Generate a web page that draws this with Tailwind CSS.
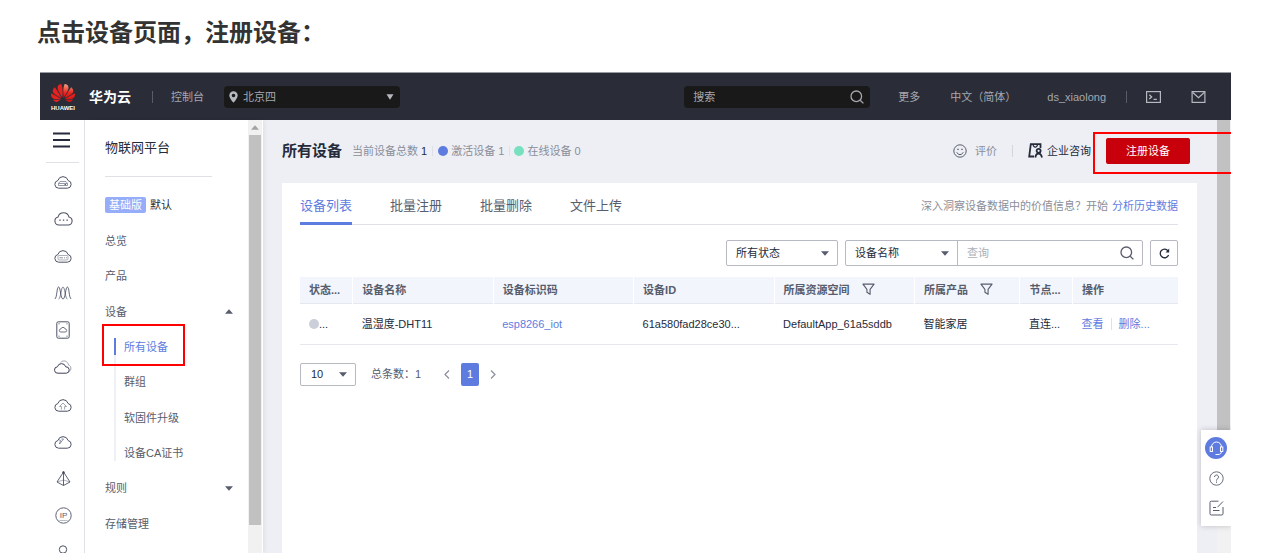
<!DOCTYPE html>
<html lang="zh-CN">
<head>
    <meta charset="UTF-8">
    <meta name="viewport" content="width=device-width, initial-scale=1.0">
    <title>所有设备</title>
    <script src="https://cdn.jsdelivr.net/npm/@tailwindcss/browser@4"></script>
</head>
<body class="h-screen flex flex-col bg-white pl-10 pr-[38px] pb-[7px] overflow-hidden font-['Liberation_Sans','Noto_Sans_CJK_SC',sans-serif] text-[11px] leading-4 text-[#575d6c]">
    <!-- Shared icons -->
    <svg class="hidden">
        <symbol id="cloud" viewBox="0 0 18 14">
            <path d="M4.6 13.2A3.9 3.9 0 0 1 3.9 5.5a5.3 5.3 0 0 1 10.2 0 3.9 3.9 0 0 1-.7 7.7z" fill="none" stroke="#4c5266" stroke-width="1"/>
        </symbol>
        <symbol id="petals" viewBox="0 0 12 24">
            <path d="M3.67 6.14S1.82 7.91 1.72 9.78v.35c.08 1.51 1.22 2.4 1.22 2.4 1.83 1.79 6.26 4.04 7.3 4.55 0 0 .06.03.1-.01l.02-.04v-.04C7.52 10.8 3.67 6.14 3.67 6.14zM9.65 18.6c-.02-.08-.1-.08-.1-.08l-7.38.26c.8 1.43 2.15 2.53 3.56 2.2.96-.25 3.16-1.78 3.88-2.3.06-.05.04-.09.04-.09zm.08-.78C6.49 15.63.21 12.28.21 12.28c-.15.46-.2.9-.21 1.3v.07c0 1.07.4 1.82.4 1.82.8 1.69 2.34 2.2 2.34 2.2.7.3 1.4.31 1.4.31.12.02 4.4 0 5.54 0 .05 0 .08-.05.08-.05v-.06c0-.03-.03-.05-.03-.05zM9.06 3.19a3.42 3.42 0 0 0-2.57 3.15v.41c.03.6.16 1.05.16 1.05.66 2.9 3.86 7.65 4.55 8.65.05.05.1.03.1.03a.1.1 0 0 0 .06-.1c1.06-10.6-1.11-13.42-1.11-13.42-.32.02-1.19.23-1.19.23z"/>
        </symbol>
        <symbol id="search" viewBox="0 0 14 14">
            <circle cx="6.3" cy="6.3" r="5.3" fill="none" stroke="currentColor" stroke-width="1.3"/>
            <path d="M10.2 10.2l3.2 3.2" stroke="currentColor" stroke-width="1.3"/>
        </symbol>
        <symbol id="funnel" viewBox="0 0 14 14">
            <path d="M1 1.2h12L8.7 6.8v5.4L5.3 10V6.8z" fill="none" stroke="#575d6c" stroke-width="1.2" stroke-linejoin="round"/>
        </symbol>
        <symbol id="down" viewBox="0 0 8 5">
            <path d="M0 0.3h8L4 4.8z" fill="currentColor"/>
        </symbol>
    </svg>

    <h1 class="shrink-0 h-[72px] pt-[17px] text-2xl font-bold text-[#333] -ml-[3px]">点击设备页面，注册设备：</h1>

    <div class="relative flex-1 min-h-0 flex flex-col overflow-hidden">
        <!-- Top bar -->
        <header class="shrink-0 h-12 flex items-center bg-[#2a2c37] border-t border-[#9a9ba1] pl-[10px] pr-[25px] text-[#a5a8b0]">
            <a href="#" aria-label="HUAWEI" class="block">
                <svg class="w-[26px] h-[28px]" viewBox="0 0 26 28">
                    <defs>
                        <linearGradient id="red" x1="0" y1="0" x2="0" y2="1">
                            <stop offset="0" stop-color="#f7a07c"/>
                            <stop offset=".5" stop-color="#e8241f"/>
                            <stop offset="1" stop-color="#d0100f"/>
                        </linearGradient>
                    </defs>
                    <use href="#petals" x="1" y="-2" width="12" height="24" fill="#e2231f"/>
                    <g transform="translate(26 0) scale(-1 1)"><use href="#petals" x="1" y="-2" width="12" height="24" fill="url(#red)"/></g>
                    <text x="13" y="27" text-anchor="middle" font-size="6" font-weight="700" fill="#fff">HUAWEI</text>
                </svg>
            </a>
            <a href="#" class="ml-[13px] text-sm font-bold text-white">华为云</a>
            <span class="ml-[21px] w-px h-3 bg-[#5a5c66]"></span>
            <a href="#" class="ml-[18px]">控制台</a>
            <div class="relative ml-5 flex items-center">
                <svg class="absolute left-[5px] w-[9px] h-3" viewBox="0 0 9 12"><path fill-rule="evenodd" d="M4.5.3A4.2 4.2 0 0 0 .3 4.5C.3 7.3 4.5 11.7 4.5 11.7S8.7 7.3 8.7 4.5A4.2 4.2 0 0 0 4.5.3zm0 2.4a1.8 1.8 0 1 1 0 3.6 1.8 1.8 0 0 1 0-3.6z" fill="#b5b8bf"/></svg>
                <select aria-label="区域" class="appearance-none w-44 h-[22px] pl-[19px] rounded-sm bg-[#191919]">
                    <option>北京四</option>
                </select>
                <svg class="absolute right-[6px] w-2 h-[6px] pointer-events-none" viewBox="0 0 8 6"><path d="M.5.3h7L4 5.8z" fill="#b5b8bf"/></svg>
            </div>
            <div class="relative ml-auto flex items-center">
                <input type="text" aria-label="搜索" placeholder="搜索" class="w-[186px] h-[22px] pl-[9px] rounded-sm bg-[#191919] placeholder:text-[#a5a8b0]">
                <svg class="absolute right-[6px] w-[14px] h-[14px]"><use href="#search"/></svg>
            </div>
            <a href="#" class="ml-7">更多</a>
            <a href="#" class="ml-[30px]">中文（简体）</a>
            <a href="#" class="ml-[31px]">ds_xiaolong</a>
            <span class="ml-5 w-px h-3 bg-[#5a5c66]"></span>
            <button type="button" aria-label="Cloud Shell" class="ml-[19px]">
                <svg class="w-[15px] h-3" viewBox="0 0 15 12" fill="none" stroke="#b5b8bf"><rect x=".6" y=".6" width="13.8" height="10.8" stroke-width="1.2"/><path d="M3.3 3.7l2.4 2.2-2.4 2.2M7.5 8.4h3.4" stroke-width="1.3"/></svg>
            </button>
            <button type="button" aria-label="消息" class="ml-[30px]">
                <svg class="w-[15px] h-3" viewBox="0 0 14 12" fill="none" stroke="#b5b8bf" stroke-width="1.2"><rect x=".6" y=".6" width="12.8" height="10.8"/><path d="M1 1.2l6 5.6 6-5.6"/></svg>
            </button>
        </header>

        <div class="flex-1 min-h-0 flex">
            <!-- Service rail -->
            <aside class="shrink-0 w-[45px] flex flex-col items-center border-r border-[#dfe1e6] overflow-hidden">
                <button type="button" aria-label="菜单" class="mt-3 ml-[-2px] shrink-0">
                    <svg class="w-[17px] h-4" viewBox="0 0 17 16" stroke="#252b3a" stroke-width="1.8"><path d="M0 1.5h17M0 8h17M0 14.5h17"/></svg>
                </button>
                <span class="shrink-0 mt-[14px] w-[33px] h-px bg-[#dfe1e6]"></span>
                <div class="pl-[2px] flex flex-col items-center">
                    <a href="#" aria-label="弹性云服务器" class="h-[37px] flex items-center">
                        <svg class="w-[18px] h-[14px]" viewBox="0 0 18 14"><use href="#cloud"/><path d="M4.500 8.500l1.500-2h6l1.500 2v2h-9zM4.500 8.500h9" fill="none" stroke="#7a8094" stroke-width=".8"/><path d="M10.500 9.600h1.500" stroke="#4c5266"/></svg>
                    </a>
                    <a href="#" aria-label="云耀" class="h-[37px] flex items-center">
                        <svg class="w-[19px] h-[15px]" viewBox="0 0 18 14"><use href="#cloud"/><path d="M5 8.500h1.300M8.400 8.500h1.300M11.800 8.500h1.300" stroke="#4c5266" stroke-width="1.300"/></svg>
                    </a>
                    <a href="#" aria-label="裸金属服务器" class="h-[37px] flex items-center">
                        <svg class="w-[18px] h-[14px]" viewBox="0 0 18 14"><use href="#cloud"/><rect x="4" y="6.500" width="10" height="4.500" rx="1" fill="none" stroke="#8a8e99" stroke-width=".7"/><path d="M5.500 8.800h3.500M10 8.800h1M12 8.800h1" stroke="#8a8e99"/></svg>
                    </a>
                    <a href="#" aria-label="弹性伸缩" class="h-[37px] flex items-center">
                        <svg class="w-[18px] h-[14px]" viewBox="0 0 18 14" fill="none" stroke="#4c5266" stroke-width=".9"><path d="M.8 13C3.200 12 2.600 1 4.600 1S6.500 13 9 13s2.400-12 4.400-12 1.400 11 3.800 12"/><path d="M4.600 13C6.800 13 7 1 9 1s2.200 12 4.400 12" opacity=".8"/></svg>
                    </a>
                    <a href="#" aria-label="云硬盘" class="h-[37px] flex items-center">
                        <svg class="w-[14px] h-[18px]" viewBox="0 0 14 18" fill="none" stroke="#4c5266"><rect x=".8" y=".8" width="12.400" height="16.400" rx="1.500"/><path d="M4.800 11a1.500 1.500 0 0 1 0-3 2.300 2.300 0 0 1 4.400 0 1.500 1.500 0 0 1 0 3z" stroke-width=".8"/><path d="M2.500 2.800h1M10.500 2.800h1M2.500 15.200h1M10.500 15.200h1"/></svg>
                    </a>
                    <a href="#" aria-label="专属云" class="h-[38px] flex items-center">
                        <svg class="w-[18px] h-[14px]" viewBox="0 0 18 14" fill="none" stroke="#3c4256"><path d="M4 13.200a3.200 3.200 0 0 1-.6-6.400 4.300 4.300 0 0 1 8.300 0 3.200 3.200 0 0 1 .6 6.400z"/><path d="M6.500 2.500C9.500-.6 14 1.200 14.500 5c3 .9 3.200 5 .6 6.500" stroke="#8a8e99" stroke-width=".8"/></svg>
                    </a>
                    <a href="#" aria-label="对象存储" class="h-[37px] flex items-center">
                        <svg class="w-[18px] h-[14px]" viewBox="0 0 18 14"><use href="#cloud"/><path d="M7.400 11.500V8.500H5.500L9 5l3.500 3.500h-1.900v3" fill="none" stroke="#8a8e99" stroke-width=".8"/></svg>
                    </a>
                    <a href="#" aria-label="云加速" class="h-[37px] flex items-center">
                        <svg class="w-[18px] h-[14px]" viewBox="0 0 18 14"><use href="#cloud"/><path d="M4.500 4.500l2 1L5.500 9l4-5H7.500" fill="none" stroke="#6b7186" stroke-width=".8"/></svg>
                    </a>
                    <a href="#" aria-label="虚拟私有云" class="h-[37px] flex items-center">
                        <svg class="w-[15px] h-[15px]" viewBox="0 0 15 15" fill="none" stroke="#4c5266" stroke-width=".9"><path d="M7.500 1L1 11l6.500 3.500L14 11zM7.500 1v13.500"/><path d="M1 11l6.500-2L14 11" opacity=".5"/><circle cx="7.500" cy="1.300" r=".8" fill="#252b3a"/></svg>
                    </a>
                    <a href="#" aria-label="弹性公网IP" class="h-[37px] flex items-center">
                        <svg class="w-[17px] h-[17px]" viewBox="0 0 17 17"><circle cx="8.500" cy="8.500" r="7.700" fill="none" stroke="#4c5266" stroke-width=".9"/><text x="8.500" y="11" text-anchor="middle" font-size="8" fill="#575d6c">IP</text><path d="M4.500 13.500h8" stroke="#8a8e99" stroke-width=".6"/></svg>
                    </a>
                    <a href="#" aria-label="用户" class="h-[37px] flex items-center">
                        <svg class="w-[14px] h-[16px]" viewBox="0 0 14 16" fill="none" stroke="#4c5266"><circle cx="7" cy="4.500" r="3.700"/><path d="M1 15c0-4 2.500-6 6-6s6 2 6 6"/></svg>
                    </a>
                </div>
            </aside>

            <!-- Side navigation -->
            <nav class="relative z-10 shrink-0 w-[178px] flex bg-white shadow-[2px_0_4px_rgba(0,0,0,0.06)]">
                <div class="flex-1 min-w-0 pl-5 overflow-hidden">
                    <h2 class="mt-[18px] text-[13px] leading-5 text-[#252b3a]">物联网平台</h2>
                    <div class="mt-[18px] w-[107px] h-px bg-[#dfe1e6]"></div>
                    <div class="mt-[10px] h-9 flex items-center text-[#252b3a]">
                        <span class="h-4 px-1 rounded-xs bg-[#96adfa] text-white">基础版</span>
                        <span class="ml-1">默认</span>
                    </div>
                    <a href="#" class="h-[35px] flex items-center">总览</a>
                    <a href="#" class="h-9 flex items-center">产品</a>
                    <button type="button" class="w-full h-[35px] pr-[15px] flex items-center justify-between">设备
                        <svg class="w-2 h-[5px] rotate-180"><use href="#down"/></svg>
                    </button>
                    <div class="ml-[9px]">
                        <div class="relative">
                            <span class="absolute left-0 top-[9px] bottom-[9px] w-[2px] bg-[#eef0f5]"></span>
                            <a href="#" class="relative h-[35px] pl-[10px] flex items-center text-[#5e7ce0]">
                                <span class="absolute left-0 top-[9px] w-[2px] h-[17px] bg-[#5e7ce0]"></span>所有设备
                            </a>
                            <a href="#" class="h-9 pl-[10px] flex items-center">群组</a>
                            <a href="#" class="h-[35px] pl-[10px] flex items-center">软固件升级</a>
                            <a href="#" class="h-[35px] pl-[10px] flex items-center">设备CA证书</a>
                        </div>
                    </div>
                    <button type="button" class="w-full h-9 pr-[15px] flex items-center justify-between">规则
                        <svg class="w-2 h-[5px]"><use href="#down"/></svg>
                    </button>
                    <a href="#" class="h-[35px] flex items-center">存储管理</a>
                </div>
                <!-- Scrollbar -->
                <div class="shrink-0 w-[14px] mr-px flex flex-col bg-[#f1f1f1]">
                    <svg class="mx-auto my-[5px] w-2 h-[5px] rotate-180 text-[#a3a3a3]"><use href="#down"/></svg>
                    <div class="mx-px h-[90%] bg-[#c1c1c1]"></div>
                    <div class="h-7"></div>
                </div>
                <!-- Highlight on the selected entry -->
                <div class="absolute left-[17px] top-[204px] w-[83px] h-[42px] border-2 border-[#f00]"></div>
            </nav>

            <!-- Content -->
            <main class="flex-1 min-w-0 flex bg-[#eeeff5]">
                <div class="flex-1 min-w-0 flex flex-col pl-[19px] pr-5">
                    <div class="h-[63px] shrink-0 pr-[7px] pb-[2px] flex items-center text-[#8a8e99]">
                        <h2 class="text-[15px] font-bold text-[#252b3a]">所有设备</h2>
                        <span class="ml-[10px]">当前设备总数 <span class="text-[#252b3a]">1</span></span>
                        <span class="ml-[5px] mr-[5px] w-px h-[10px] bg-[#dfe1e6]"></span>
                        <span class="w-[10px] h-[10px] rounded-full bg-[#5e7ce0]"></span>
                        <span class="ml-[3px]">激活设备 1</span>
                        <span class="ml-[5px] mr-[4px] w-px h-[10px] bg-[#dfe1e6]"></span>
                        <span class="w-[10px] h-[10px] rounded-full bg-[#76e0bf]"></span>
                        <span class="ml-[3px]">在线设备 0</span>
                        <a href="#" class="ml-auto flex items-center gap-2">
                            <svg class="w-[14px] h-[14px]" viewBox="0 0 14 14" fill="none" stroke="#575d6c"><circle cx="7" cy="7" r="6.200"/><path d="M3.800 8.300c1 3 5.400 3 6.400 0"/><path d="M4.300 5.300h1.400M8.300 5.300h1.400" stroke-width="1.200"/></svg>
                            评价
                        </a>
                        <span class="mx-[15px] w-px h-3 bg-[#d3d5dc]"></span>
                        <a href="#" class="flex items-center gap-1 text-[#252b3a]">
                            <svg class="w-[15px] h-[15px]" viewBox="0 0 15 15" fill="none" stroke="#252b3a" stroke-width="1.800"><path d="M12.500 5V1.200H2.800L1.200 13.500h4.800"/><path d="M5 1.500c.5 3.400 4 3.400 4.600 0" stroke-width="1.300"/><circle cx="10.600" cy="7.800" r="2"/><path d="M7.300 14.500c.4-2.500 1.400-4 3.200-4s2.900 1.500 3.500 4"/></svg>
                            企业咨询
                        </a>
                        <div class="relative ml-[15px]">
                            <button type="button" class="block w-[84px] h-[26px] rounded-xs bg-[#c7000b] text-white">注册设备</button>
                            <!-- Highlight on the register button -->
                            <div class="absolute -left-[13px] -top-[6px] w-[160px] h-[42px] border-2 border-[#f00] pointer-events-none"></div>
                        </div>
                    </div>

                    <section class="flex-1 pl-[18px] pr-[19px] bg-white">
                        <div class="h-[42px] flex items-stretch border-b border-[#dfe1e6]">
                            <div class="flex gap-[38px] text-[13px]">
                                <a href="#" class="relative pt-1 flex items-center text-[#5e7ce0]">设备列表<span class="absolute inset-x-0 -bottom-px h-[3px] bg-[#5e7ce0]"></span></a>
                                <a href="#" class="pt-1 flex items-center">批量注册</a>
                                <a href="#" class="pt-1 flex items-center">批量删除</a>
                                <a href="#" class="pt-1 flex items-center">文件上传</a>
                            </div>
                            <p class="ml-auto pt-1 flex items-center gap-1 text-[#8a8e99]">深入洞察设备数据中的价值信息？开始 <a href="#" class="text-[#5e7ce0]">分析历史数据</a></p>
                        </div>

                        <!-- Filters -->
                        <div class="mt-[15px] flex justify-end text-[#252b3a]">
                            <div class="relative flex items-center">
                                <select aria-label="状态" class="appearance-none w-28 h-[26px] pl-[9px] rounded-xs border border-[#b6b9c2]">
                                    <option>所有状态</option>
                                </select>
                                <svg class="absolute right-[9px] w-2 h-[5px] text-[#575d6c] pointer-events-none"><use href="#down"/></svg>
                            </div>
                            <div class="relative ml-[7px] flex items-center">
                                <select aria-label="搜索字段" class="appearance-none w-[113px] h-[26px] pl-[9px] rounded-l-xs border border-[#b6b9c2]">
                                    <option>设备名称</option>
                                </select>
                                <svg class="absolute right-[9px] w-2 h-[5px] text-[#575d6c] pointer-events-none"><use href="#down"/></svg>
                            </div>
                            <div class="relative -ml-px flex items-center">
                                <input type="text" aria-label="查询" placeholder="查询" class="w-[186px] h-[26px] pl-[9px] rounded-r-xs border border-[#b6b9c2] placeholder:text-[#adb0b8]">
                                <svg class="absolute right-[9px] w-[14px] h-[14px] text-[#575d6c]"><use href="#search"/></svg>
                            </div>
                            <button type="button" aria-label="刷新" class="ml-[7px] w-7 h-[26px] flex items-center justify-center rounded-xs border border-[#b6b9c2]">
                                <svg class="w-[11px] h-[11px]" viewBox="0 0 11 11"><path d="M9 2.800A4.300 4.300 0 1 0 9.600 7" fill="none" stroke="#252b3a" stroke-width="1.300"/><path d="M10.200.6v4H6.600z" fill="#252b3a"/></svg>
                            </button>
                        </div>

                        <!-- Device table -->
                        <table class="mt-[11px] w-full table-fixed text-left text-[#252b3a]">
                            <colgroup>
                                <col class="w-[6%]"><col class="w-[16%]"><col class="w-[16%]"><col class="w-[16%]"><col class="w-[16%]"><col class="w-[12%]"><col class="w-[6%]"><col class="w-[12%]">
                            </colgroup>
                            <thead class="text-[#575d6c]">
                                <tr class="h-[26px] bg-[#f2f5fc] border-b border-[#e6e8ee]">
                                    <th class="px-[9px] border-r border-white whitespace-nowrap">状态...</th>
                                    <th class="px-[9px] border-r border-white">设备名称</th>
                                    <th class="px-[9px] border-r border-white">设备标识码</th>
                                    <th class="px-[9px] border-r border-white">设备ID</th>
                                    <th class="px-[9px] border-r border-white"><span class="flex items-center gap-3">所属资源空间 <svg class="w-[13px] h-[13px]"><use href="#funnel"/></svg></span></th>
                                    <th class="px-[9px] border-r border-white"><span class="flex items-center gap-3">所属产品 <svg class="w-[13px] h-[13px]"><use href="#funnel"/></svg></span></th>
                                    <th class="px-[9px] border-r border-white whitespace-nowrap">节点...</th>
                                    <th class="px-[9px]">操作</th>
                                </tr>
                            </thead>
                            <tbody>
                                <tr class="h-[41px] border-b border-[#e6e8ee]">
                                    <td class="px-[9px]"><span class="flex items-center"><span class="w-[10px] h-[10px] rounded-full bg-[#cacfd9]"></span>...</span></td>
                                    <td class="px-[9px]">温湿度-DHT11</td>
                                    <td class="px-[9px]"><a href="#" class="text-[#5e7ce0]">esp8266_iot</a></td>
                                    <td class="px-[9px]">61a580fad28ce30...</td>
                                    <td class="px-[9px] whitespace-nowrap">DefaultApp_61a5sddb</td>
                                    <td class="px-[9px]">智能家居</td>
                                    <td class="px-[9px] whitespace-nowrap">直连...</td>
                                    <td class="px-[9px]"><span class="flex items-center text-[#5e7ce0]"><a href="#">查看</a><span class="mx-[7px] w-px h-3 bg-[#dfe1e6]"></span><a href="#">删除</a>...</span></td>
                                </tr>
                            </tbody>
                        </table>

                        <!-- Pagination -->
                        <div class="mt-[18px] flex items-center">
                            <div class="relative flex items-center">
                                <select aria-label="每页条数" class="appearance-none w-14 h-[23px] pl-[10px] rounded-xs border border-[#b6b9c2] text-[#252b3a]">
                                    <option>10</option>
                                </select>
                                <svg class="absolute right-[9px] w-2 h-[5px] pointer-events-none"><use href="#down"/></svg>
                            </div>
                            <span class="ml-[15px]">总条数：1</span>
                            <button type="button" aria-label="上一页" class="ml-[23px]"><svg class="w-[6px] h-[9px]" viewBox="0 0 6 9"><path d="M5 .5l-4 4 4 4" fill="none" stroke="#8a8e99" stroke-width="1.200"/></svg></button>
                            <button type="button" class="mx-[11px] w-[18px] h-[23px] rounded-xs bg-[#5e7ce0] text-white">1</button>
                            <button type="button" aria-label="下一页"><svg class="w-[6px] h-[9px]" viewBox="0 0 6 9"><path d="M1 .5l4 4-4 4" fill="none" stroke="#8a8e99" stroke-width="1.200"/></svg></button>
                        </div>
                    </section>
                </div>
                <!-- Scrollbar -->
                <div class="shrink-0 w-[14px] pr-px bg-[#f1f1f1]">
                    <div class="h-[90%] bg-[#c1c1c1]"></div>
                </div>
            </main>
        </div>

        <!-- Help widget -->
        <div class="absolute z-20 right-0 bottom-[27px] w-[30px] py-[7px] flex flex-col items-center gap-2 bg-white shadow-[0_0_6px_rgba(0,0,0,0.2)]">
            <button type="button" aria-label="客服" class="w-[22px] h-[22px] flex items-center justify-center rounded-full bg-[#5e7ce0]">
                <svg class="w-[15px] h-[15px]" viewBox="0 0 15 15" fill="none" stroke="#fff"><path d="M2.500 6a5 5 0 0 1 10 0"/><rect x="1.200" y="6" width="2.300" height="4.500"/><rect x="11.500" y="6" width="2.300" height="4.500"/><path d="M12.500 10.500c0 2-1.500 3-3.500 3H6.500"/></svg>
            </button>
            <button type="button" aria-label="帮助" class="h-[22px]">
                <svg class="w-[15px] h-[15px]" viewBox="0 0 15 15" fill="none" stroke="#575d6c"><circle cx="7.500" cy="7.500" r="6.700" stroke-width=".9"/><path d="M5.500 6a2 2 0 1 1 3.200 1.600c-.8.6-1.200.9-1.200 2M7.500 10.600v1.200"/></svg>
            </button>
            <button type="button" aria-label="反馈" class="h-[22px]">
                <svg class="w-[15px] h-4" viewBox="0 0 15 16" fill="none" stroke="#575d6c"><path d="M9.500 1.200H2.200c-.8 0-1.200.4-1.200 1.200v11.400c0 .8.400 1.200 1.200 1.200h10.600c.8 0 1.200-.4 1.200-1.200V7"/><path d="M14 1.500L8.500 7.200M4 7.500h3M4 10.500h6.500"/></svg>
            </button>
        </div>
    </div>
</body>
</html>
